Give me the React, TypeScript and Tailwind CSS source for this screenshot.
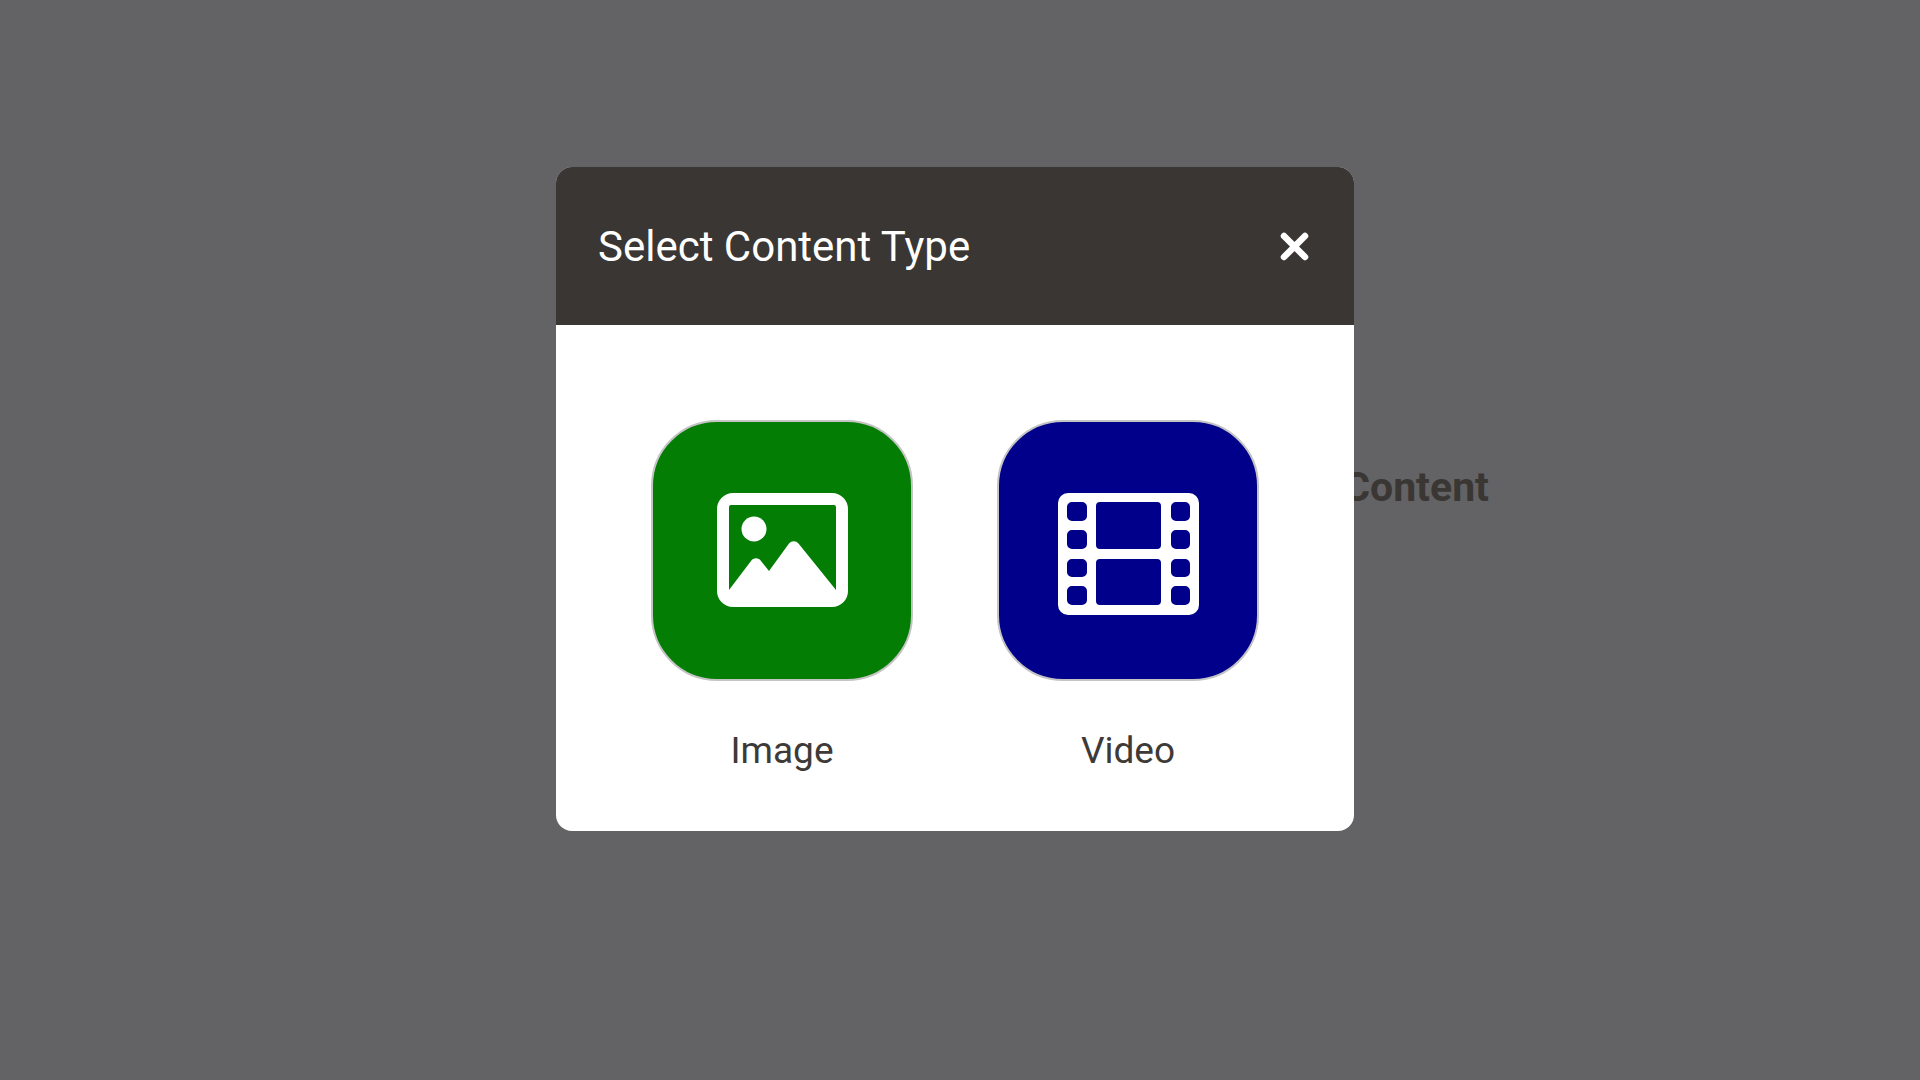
import React from 'react';

const rr = (x: number, y: number, x2: number, y2: number, r: number) =>
  `M${x + r} ${y}H${x2 - r}a${r} ${r} 0 0 1 ${r} ${r}V${y2 - r}a${r} ${r} 0 0 1 -${r} ${r}H${x + r}a${r} ${r} 0 0 1 -${r} -${r}V${y + r}a${r} ${r} 0 0 1 ${r} -${r}z`;

const ImageIcon = () => (
  <svg className="mb-[1px]" width="131" height="114" viewBox="0 0 131 114" fill="white">
    <path
      fillRule="evenodd"
      d={`${rr(0, 0, 131, 114, 16)}M14 12H117a2 2 0 0 1 2 2V97L81.500 50.500a6 6 0 0 0-9.500 0L52 78L44 68a6 6 0 0 0-10 0L12 97V14a2 2 0 0 1 2-2z`}
    />
    <circle cx="37" cy="36" r="12.500" />
  </svg>
);

const filmHoles = [
  [9, 9, 29, 28], [9, 37, 29, 56], [9, 66, 29, 84], [9, 93, 29, 112],
  [113, 9, 132, 28], [113, 37, 132, 56], [113, 66, 132, 84], [113, 93, 132, 112],
];

const FilmIcon = () => (
  <svg className="mt-[7px]" width="141" height="122" viewBox="0 0 141 122" fill="white">
    <path
      fillRule="evenodd"
      d={[
        rr(0, 0, 141, 122, 10),
        ...filmHoles.map(([a, b, c, d]) => rr(a, b, c, d, 5)),
        rr(38, 9, 103, 56, 4),
        rr(38, 66, 103, 112, 4),
      ].join('')}
    />
  </svg>
);

const CloseIcon = () => (
  <svg width="29" height="29" viewBox="0 0 29 29" stroke="white" strokeWidth="6.500" strokeLinecap="round">
    <path d="M4 4L25 25M25 4L4 25" />
  </svg>
);

const Option = ({ label, color, children }: { label: string; color: string; children: React.ReactNode }) => (
  <div className="flex w-[262px] flex-col items-center">
    <div className={`flex h-[261px] w-[262px] items-center justify-center rounded-[66px] border-2 border-[#c4c4c4] ${color}`}>
      {children}
    </div>
    <span className="mt-[47px] text-[37px] leading-[46px] text-[#3d3a38]">{label}</span>
  </div>
);

export default function App() {
  return (
    <div className="relative h-[1080px] w-[1920px] overflow-hidden bg-[#636365] font-['Roboto',sans-serif]">
      {/* page behind the dialog */}
      <div className="flex justify-end pr-[431px] pt-[460px]">
        <h2 className="text-[41px] leading-[54px] font-bold text-[#3a3633]">Add Content</h2>
      </div>

      {/* dialog */}
      <div className="absolute inset-0 flex justify-center pt-[167px] pr-[10px]">
        <div className="h-[664px] w-[798px] overflow-hidden rounded-[16px] bg-white">
          <div className="flex h-[158px] items-center justify-between bg-[#3a3633] pl-[42px] pr-[45px]">
            <span className="pt-[2px] text-[42px] leading-[50px] font-normal text-white">Select Content Type</span>
            <CloseIcon />
          </div>
          <div className="flex gap-[84px] pl-[95px] pt-[95px]">
            <Option label="Image" color="bg-[#047d04]">
              <ImageIcon />
            </Option>
            <Option label="Video" color="bg-[#00008b]">
              <FilmIcon />
            </Option>
          </div>
        </div>
      </div>
    </div>
  );
}
